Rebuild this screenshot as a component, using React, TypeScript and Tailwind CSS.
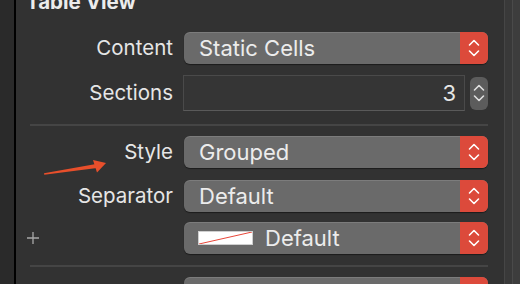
import React from "react";

const Chevrons = ({ className = "" }: { className?: string }) => (
    <svg width="12" height="20" viewBox="0 0 12 20" className={className} fill="none">
        <path d="M1.5 7 L6 2.5 L10.5 7" stroke="currentColor" strokeWidth="1.6" strokeLinecap="round" strokeLinejoin="round" />
        <path d="M1.5 13 L6 17.5 L10.5 13" stroke="currentColor" strokeWidth="1.6" strokeLinecap="round" strokeLinejoin="round" />
    </svg>
);

const Popup = ({ children }: { children: React.ReactNode }) => (
    <div className="flex h-[32px] w-[304px] items-stretch rounded-[6px] bg-[#6a6a6a] shadow-[0_1px_1px_rgba(0,0,0,0.45),inset_0_1px_0_rgba(255,255,255,0.12)] overflow-hidden">
        <div className="flex flex-1 items-center pl-[15px] text-[22px] text-[#ececec]">{children}</div>
        <div className="flex w-[28px] items-center justify-center bg-[#dc4a3b] text-white">
            <Chevrons />
        </div>
    </div>
);

const Row = ({ label, children, className = "" }: { label?: React.ReactNode; children: React.ReactNode; className?: string }) => (
    <div className={`flex shrink-0 items-center gap-[11px] ${className}`}>
        <div className="flex w-[157px] justify-end text-[20.5px] text-[#e6e6e6]">{label}</div>
        {children}
    </div>
);

export default function App() {
    return (
        <div className="flex h-[284px] w-[520px] overflow-hidden bg-[#323232]" style={{ fontFamily: "Inter, 'Liberation Sans', sans-serif" }}>
            <div className="w-[14px] bg-[#2a2a2a]" />
            <div className="w-[2px] bg-black" />
            <div className="relative flex w-[488px] flex-col bg-[#323232]">
                <div className="-mt-[10px] h-[24px] shrink-0 pl-[10px] text-[20.5px] font-bold leading-[24px] text-[#ececec]">Table View</div>

                <Row label="Content" className="mt-[18px]">
                    <Popup>Static Cells</Popup>
                </Row>

                <Row label="Sections" className="mt-[11px]">
                    <div className="-ml-[1px] flex h-[36px] w-[282px] items-center justify-end border border-[#4a4a4a] border-b-[#5a5a5a] bg-[#353535] pr-[8px] text-[22px] text-[#e6e6e6]">
                        3
                    </div>
                    <div className="-ml-[6px] flex h-[33px] w-[18px] items-center justify-center rounded-[6px] bg-[#5c5c5c] text-[#e0e0e0]">
                        <Chevrons />
                    </div>
                </Row>

                <div className="ml-[14px] mt-[13px] h-[2px] w-[458px] shrink-0 bg-[#454545]" />

                <Row label="Style" className="mt-[10px]">
                    <Popup>Grouped</Popup>
                </Row>

                <Row label="Separator" className="mt-[12px]">
                    <Popup>Default</Popup>
                </Row>

                <Row
                    className="mt-[10px]"
                    label={
                        <svg className="mr-auto ml-[11px]" width="12" height="12" viewBox="0 0 12 12">
                            <path d="M6 0 V12 M0 6 H12" stroke="#a8a8a8" strokeWidth="1.3" />
                        </svg>
                    }
                >
                    <Popup>
                        <div className="relative -ml-[1px] mr-[12px] h-[14px] w-[55px] border border-[#cfcfcf] bg-white">
                            <svg className="absolute inset-0" width="53" height="12" viewBox="0 0 53 12" preserveAspectRatio="none">
                                <line x1="0" y1="12" x2="53" y2="0" stroke="#e8473a" strokeWidth="1" />
                            </svg>
                        </div>
                        Default
                    </Popup>
                </Row>

                <div className="ml-[14px] mt-[11px] h-[2px] w-[458px] shrink-0 bg-[#454545]" />

                <Row className="mt-[10px]">
                    <Popup>{""}</Popup>
                </Row>

                {/* annotation arrow */}
                <svg className="absolute left-[24px] top-[156px]" width="70" height="22" viewBox="0 0 70 22" fill="none">
                    <path d="M4 17.2 L56 8 L57 12 L4.3 18.8 Z" fill="#e84f2b" />
                    <path d="M53 4 L66 7 L57 16.5 Z" fill="#e84f2b" />
                </svg>
            </div>
            <div className="w-[1px] bg-[#464646]" />
            <div className="w-[7px] bg-[#393939]" />
            <div className="w-[1px] bg-[#4a4a4a]" />
            <div className="flex-1 bg-[#3d3d3d]" />
        </div>
    );
}
